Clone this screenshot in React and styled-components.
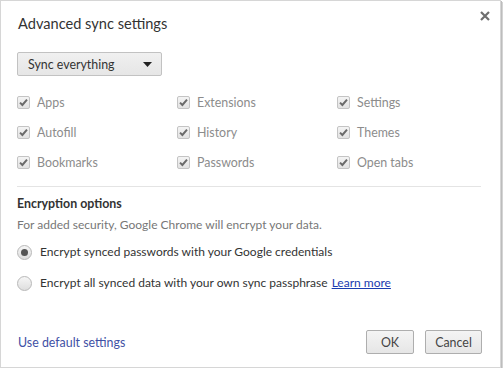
import React from 'react';
import styled, { createGlobalStyle } from 'styled-components';

const Global = createGlobalStyle`
    html, body {
        margin: 0;
        padding: 0;
        background: #ffffff;
    }
    body {
        font-family: Lato, "Noto Sans", sans-serif;
    }
`

const Dialog = styled.div`
    box-sizing: border-box;
    width: 501px;
    height: 368px;
    background: #fff;
    border: 1px solid #d6d6d6;
    box-shadow: 1px 1px 0 #bdbdbd, 2px 2px 0 #d4d4d4;
    display: flex;
    flex-direction: column;
    position: relative;
    color: #333;
    font-size: 12px;
`

const Title = styled.h1`
    margin: 0;
    padding: 12px 0 0 17px;
    font-size: 14.6px;
    font-weight: normal;
    color: #333;
    line-height: 22px;
`

const Close = styled.div`
    position: absolute;
    top: 9px;
    right: 9px;
    width: 12px;
    height: 12px;
`

const Body = styled.div`
    padding: 17px 16px 0 16px;
    flex: 1;
`

const Select = styled.div`
    box-sizing: border-box;
    width: 145px;
    height: 24px;
    border: 1px solid #c2c2c2;
    border-radius: 2px;
    background: linear-gradient(#f0f0f0, #e6e6e6);
    display: flex;
    align-items: center;
    justify-content: space-between;
    padding: 0 9px 0 10px;
    font-size: 12.4px;
    color: #333;
`

const Grid = styled.div`
    display: grid;
    grid-template-columns: 160px 160px 160px;
    grid-auto-rows: 30px;
    margin-top: 11px;
    padding-bottom: 9px;
    border-bottom: 1px solid #e4e4e4;
    margin-right: 3px;
`

const Item = styled.label`
    display: flex;
    align-items: center;
    gap: 7px;
    color: #8c8c8c;
    font-size: 12.4px;
`

const Box = styled.span`
    box-sizing: border-box;
    width: 13px;
    height: 13px;
    border: 1px solid #c4c4c4;
    border-radius: 2px;
    background: linear-gradient(#f4f4f4, #e2e2e2);
    display: flex;
    align-items: center;
    justify-content: center;
`

const Heading = styled.div`
    margin-top: 8px;
    font-weight: bold;
    font-size: 12.4px;
    color: #333;
    line-height: 18px;
`

const Note = styled.div`
    margin-top: 3px;
    color: #777;
    font-size: 12px;
    line-height: 18px;
`

const Radios = styled.div`
    display: flex;
    flex-direction: column;
    gap: 13px;
    margin-top: 9px;
`

const RadioRow = styled.label`
    display: flex;
    align-items: center;
    gap: 8px;
    font-size: 12px;
    color: #333;
    line-height: 18px;
`

const Radio = styled.span`
    box-sizing: border-box;
    width: 15px;
    height: 15px;
    border-radius: 50%;
    border: 1px solid #b8b8b8;
    background: linear-gradient(#f6f6f6, #dedede);
    display: flex;
    align-items: center;
    justify-content: center;
    &::after {
        content: "";
        width: 7px;
        height: 7px;
        border-radius: 50%;
        background: ${p => (p.$checked ? '#555' : 'transparent')};
    }
`

const Link = styled.a`
    color: #1a3bb0;
    text-decoration: underline;
    margin-left: 4px;
`

const Footer = styled.div`
    display: flex;
    align-items: center;
    padding: 0 18px 13px 17px;
`

const FooterLink = styled.a`
    color: #3f51a5;
    font-size: 12.4px;
    text-decoration: none;
    flex: 1;
`

const Button = styled.button`
    box-sizing: border-box;
    height: 24px;
    min-width: ${p => p.$w}px;
    margin-left: 11px;
    border: 1px solid #aeaeae;
    border-radius: 2px;
    background: linear-gradient(#f4f4f4, #e6e6e6);
    font-family: inherit;
    font-size: 12.4px;
    color: #444;
    padding: 0 8px;
`

const Check = () => (
    <svg width="9" height="9" viewBox="0 0 9 9">
        <path d="M1 4.6 L3.4 7 L8 1.6" fill="none" stroke="#6a6a6a" strokeWidth="2" />
    </svg>
)

const items = ['Apps', 'Extensions', 'Settings', 'Autofill', 'History', 'Themes', 'Bookmarks', 'Passwords', 'Open tabs'];

const App = () => {
    return (
        <>
            <Global />
            <Dialog>
                <Title>Advanced sync settings</Title>
                <Close>
                    <svg width="12" height="12" viewBox="0 0 12 12">
                        <path d="M2 2 L10 10 M10 2 L2 10" stroke="#6e6e6e" strokeWidth="2.2" />
                    </svg>
                </Close>
                <Body>
                    <Select>
                        <span>Sync everything</span>
                        <svg width="9" height="5" viewBox="0 0 9 5">
                            <path d="M0 0 L9 0 L4.5 5 Z" fill="#222" />
                        </svg>
                    </Select>
                    <Grid>
                        {items.map(name => (
                            <Item key={name}>
                                <Box><Check /></Box>
                                {name}
                            </Item>
                        ))}
                    </Grid>
                    <Heading>Encryption options</Heading>
                    <Note>For added security, Google Chrome will encrypt your data.</Note>
                    <Radios>
                        <RadioRow>
                            <Radio $checked />
                            Encrypt synced passwords with your Google credentials
                        </RadioRow>
                        <RadioRow>
                            <Radio />
                            <span>Encrypt all synced data with your own sync passphrase<Link href="#">Learn more</Link></span>
                        </RadioRow>
                    </Radios>
                </Body>
                <Footer>
                    <FooterLink href="#">Use default settings</FooterLink>
                    <Button $w={48}>OK</Button>
                    <Button $w={57}>Cancel</Button>
                </Footer>
            </Dialog>
        </>
    );
}

export default App;
